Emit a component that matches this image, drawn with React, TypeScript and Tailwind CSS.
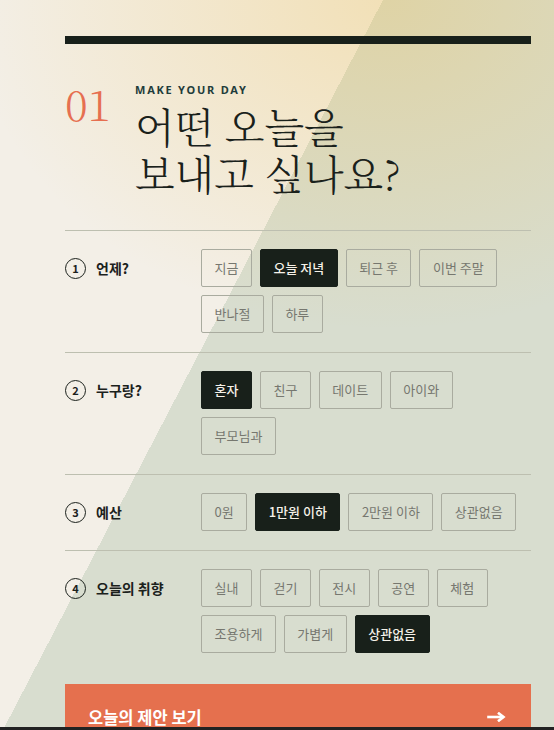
import React from 'react';

type Section = { n: number; label: string; opts: string[]; sel: number };

const sections: Section[] = [
  { n: 1, label: '언제?', opts: ['지금', '오늘 저녁', '퇴근 후', '이번 주말', '반나절', '하루'], sel: 1 },
  { n: 2, label: '누구랑?', opts: ['혼자', '친구', '데이트', '아이와', '부모님과'], sel: 0 },
  { n: 3, label: '예산', opts: ['0원', '1만원 이하', '2만원 이하', '상관없음'], sel: 1 },
  { n: 4, label: '오늘의 취향', opts: ['실내', '걷기', '전시', '공연', '체험', '조용하게', '가볍게', '상관없음'], sel: 7 },
];

export default function App() {
  return (
    <div className="w-[554px] h-[730px] overflow-hidden flex flex-col font-['Noto_Sans_CJK_KR','Noto_Sans',sans-serif]">
      <div className="h-[727px] overflow-hidden shrink-0 [background-image:radial-gradient(ellipse_420px_330px_at_390px_0px,rgba(239,189,70,0.3),rgba(239,189,70,0)),linear-gradient(117.5deg,#f3efe7_339.7px,#d8ddcf_339.7px)] [background-size:554px_730px] bg-no-repeat">
        <div className="ml-[65px] w-[466px] pt-[36px]">
          <div className="h-[8px] bg-[#18201a]" />

          <div className="mt-[38px] mb-[34px] flex items-start">
            <div className="w-[70px] shrink-0 text-[42px] leading-none font-light text-[#e66f50] font-['Noto_Serif_CJK_KR','Liberation_Serif',serif]">01</div>
            <div className="flex flex-col">
              <div className="text-[11px] leading-[16px] font-bold tracking-[0.16em] text-[#1f3d3b] font-['Noto_Sans',sans-serif]">MAKE YOUR DAY</div>
              <h1 className="mt-[4px] text-[41px] leading-[47px] font-light text-[#1a211b] font-['Noto_Serif_CJK_KR','Noto_Serif_KR','Liberation_Serif',serif]">
                어떤 오늘을
                <br />
                보내고 싶나요?
              </h1>
            </div>
          </div>

          {sections.map((s) => (
            <div key={s.n} className="border-t border-[#bdbfb0] pt-[18px] pb-[19px] flex">
              <div className="w-[136px] shrink-0 h-[38px] flex items-center gap-[10px]">
                <div className="w-[21px] h-[21px] rounded-full border-[1.5px] border-[#1b211c] flex items-center justify-center text-[11px] font-bold text-[#1b211c] leading-none">
                  {s.n}
                </div>
                <div className="text-[14px] font-bold text-[#1b211c]">{s.label}</div>
              </div>
              <div className="flex flex-wrap gap-2 flex-1">
                {s.opts.map((o, i) =>
                  i === s.sel ? (
                    <div
                      key={o + i}
                      className="h-[38px] px-[12.5px] flex items-center rounded-[2px] border border-[#18201a] bg-[#18201a] text-[13px] font-medium text-[#f5f1e8]"
                    >
                      {o}
                    </div>
                  ) : (
                    <div
                      key={o + i}
                      className="h-[38px] px-[12.5px] flex items-center rounded-[2px] border border-[#a9ab9f] text-[13px] text-[#76776f]"
                    >
                      {o}
                    </div>
                  )
                )}
              </div>
            </div>
          ))}

          <div className="mt-[12px] h-[66px] bg-[#e5704e] flex items-center justify-between pl-[23px] pr-[25px]">
            <span className="text-[16.5px] font-bold text-white">오늘의 제안 보기</span>
            <svg width="19" height="10" viewBox="0 0 19 10" fill="none" stroke="white" strokeWidth="2.6" strokeLinecap="square">
              <path d="M1.5 5H15" />
              <path d="M12 1.5L16.5 5L12 8.5" strokeLinejoin="miter" />
            </svg>
          </div>
        </div>
      </div>
      <div className="h-[3px] bg-[#222222] shrink-0" />
    </div>
  );
}
